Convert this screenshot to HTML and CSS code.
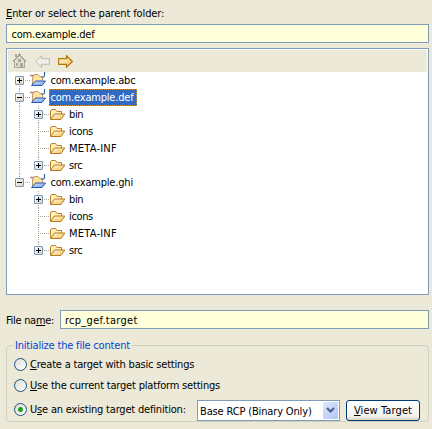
FILE: index.html
```html
<!DOCTYPE html>
<html lang="en">
<head>
<meta charset="utf-8">
<title>Target Definition</title>
<link rel="stylesheet" href="styles.css">
</head>
<body>
<svg class="defs" aria-hidden="true">
  <defs>
    <linearGradient id="gold" x1="0" y1="0" x2="1" y2="1"><stop offset="0" stop-color="#fffbe0"/><stop offset="1" stop-color="#f0c35c"/></linearGradient>
    <linearGradient id="blue" x1="0" y1="0" x2="1" y2="1"><stop offset="0" stop-color="#d3e5fb"/><stop offset="1" stop-color="#6fa0e4"/></linearGradient>
    <symbol id="folder" viewBox="0 0 16 14">
      <path d="M.5 12V4l1-1.500h4l1.500 2h4.500v3" fill="#fff0b5" stroke="#bd7f2b"/>
      <path d="M.5 12.500l4-5.500h10.300l-3.800 5.500z" fill="url(#gold)" stroke="#b97821"/>
    </symbol>
    <symbol id="project" viewBox="0 0 17 16">
      <path d="M2.500 13V5l1-1 1-1.500h3.500l1.500 2h3v4" fill="#fce3a0" stroke="#c09a66"/>
      <path d="M0 3.500h4" stroke="#a88d85" stroke-width="1.500" fill="none"/>
      <path d="M1.500 13.500l4-4.500h10l-3.500 4.500z" fill="url(#blue)" stroke="#2a55b0"/>
      <path d="M14.500 0v3.500q0 1.800-2 1.800h-1" fill="none" stroke="#23609c" stroke-width="1.100"/>
    </symbol>
  </defs>
</svg>
<main class="page">
  <label class="text heading"><u>E</u>nter or select the parent folder:</label>
  <div class="field parent text">com.example.def</div>
  <section class="browser">
    <div class="toolbar">
      <svg class="tool" width="15" height="16" viewBox="0 0 15 16" shape-rendering="crispEdges"><path d="M3 1h2v3H3z" fill="#a9a797"/><path d="M2.500 7.500v7h10v-7l-5-5z" fill="#e4e1d2" stroke="#a9a797"/><path d="M1 8.500l6.500-7 6.500 7" fill="none" stroke="#a9a797" stroke-width="1.500"/><path d="M6 6h3v3H6zM4 10h2v3H4zM8 10h3v4H8z" fill="#a9a797"/></svg>
      <svg class="tool back" width="15" height="13" viewBox="0 0 15 13"><path d="M.7 6.500L6.500.7v3h7.800v5.600H6.500v3z" fill="#efeeea" stroke="#bdbbb5"/></svg>
      <svg class="tool next" width="15" height="13" viewBox="0 0 15 13"><path d="M14.300 6.500L8.500.7v3H.7v5.600h7.800v3z" fill="url(#gold)" stroke="#b57608" stroke-width="1.200"/></svg>
    </div>
    <div class="tree text">
      <div class="row root first"><i class="box plus"></i><svg class="project"><use href="#project"/></svg><span class="name">com.example.abc</span></div>
      <div class="row root mid"><i class="box"></i><svg class="project"><use href="#project"/></svg><span class="name selected">com.example.def</span></div>
      <div class="row child outer"><i class="box plus"></i><svg class="folder"><use href="#folder"/></svg><span>bin</span></div>
      <div class="row child outer"><i class="gap"></i><svg class="folder"><use href="#folder"/></svg><span>icons</span></div>
      <div class="row child outer"><i class="gap"></i><svg class="folder"><use href="#folder"/></svg><span class="meta">META-INF</span></div>
      <div class="row child outer end"><i class="box plus"></i><svg class="folder"><use href="#folder"/></svg><span>src</span></div>
      <div class="row root last"><i class="box"></i><svg class="project"><use href="#project"/></svg><span class="name">com.example.ghi</span></div>
      <div class="row child"><i class="box plus"></i><svg class="folder"><use href="#folder"/></svg><span>bin</span></div>
      <div class="row child"><i class="gap"></i><svg class="folder"><use href="#folder"/></svg><span>icons</span></div>
      <div class="row child"><i class="gap"></i><svg class="folder"><use href="#folder"/></svg><span class="meta">META-INF</span></div>
      <div class="row child end"><i class="box plus"></i><svg class="folder"><use href="#folder"/></svg><span>src</span></div>
    </div>
  </section>
  <div class="filename text"><label class="filelabel">File na<u>m</u>e:</label><div class="field file">rcp_gef.target</div></div>
  <fieldset class="content text">
    <legend>Initialize the file content</legend>
    <label class="option create"><i class="radio"></i><span><u>C</u>reate a target with basic settings</span></label>
    <label class="option current"><i class="radio"></i><span><u>U</u>se the current target platform settings</span></label>
    <div class="option existing"><i class="radio checked"></i><span class="caption">U<u>s</u>e an existing target definition:</span>
      <div class="combo"><span>Base RCP (Binary Only)</span><b class="drop"><svg width="9" height="7" viewBox="0 0 9 7"><path d="M1 1l3.500 3.500L8 1" fill="none" stroke="#4d6185" stroke-width="2.200"/></svg></b></div>
      <button class="view text" type="button"><u>V</u>iew Target</button>
    </div>
  </fieldset>
</main>
</body>
</html>
```
FILE: styles.css
```css
* { box-sizing: border-box; }
body { margin: 0; background: #ece9d8; overflow: hidden; }
.defs { position: absolute; width: 0; height: 0; }
.page { width: 432px; height: 429px; padding: 6px 3px 0 6px; display: flex; flex-direction: column; }
.text { font: 11px/15px "DejaVu Sans Condensed", "DejaVu Sans", sans-serif; font-stretch: condensed; color: #000; white-space: nowrap; letter-spacing: -0.19px; }
u { text-decoration-thickness: 1px; text-underline-offset: 1px; }
.heading { height: 18px; letter-spacing: -0.12px; }
.field { height: 19px; border: 1px solid #7f9db9; background: #ffffd9; padding: 2px 5px 0; }
.parent { padding-left: 4.5px; }
.browser { margin-top: 5px; height: 247px; border: 1px solid #7f9db9; background: #fff; padding: 1px; }
.toolbar { height: 22px; background: #ece9d8; display: flex; align-items: center; padding-left: 4px; }
.back { margin-left: 8px; }
.next { margin-left: 8px; }
.tree { display: flex; flex-direction: column; }
.row { height: 17px; display: flex; align-items: center; position: relative; }
.root { padding-left: 7px; }
.child { padding-left: 26px; letter-spacing: -0.35px; }
.meta { letter-spacing: 0.22px; }
.row::before, .outer::after { content: ""; position: absolute; top: 0; bottom: 0; width: 1px; background: repeating-linear-gradient(#a9a797 0 1px, transparent 1px 2px); }
.root::before { left: 11px; }
.first::before { top: 8px; }
.last::before { bottom: 8px; }
.child::before { left: 30px; }
.end::before { bottom: 8px; }
.outer::after { left: 11px; }
.box { width: 9px; height: 9px; border: 1px solid #7898b5; border-radius: 1px; background: linear-gradient(#000, #000) center / 5px 1px no-repeat, linear-gradient(135deg, #fff, #d8d2c3); z-index: 1; }
.plus { background: linear-gradient(#000, #000) center / 5px 1px no-repeat, linear-gradient(#000, #000) center / 1px 5px no-repeat, linear-gradient(135deg, #fff, #d8d2c3); }
.gap { width: 9px; height: 1px; background: repeating-linear-gradient(90deg, #a9a797 0 1px, transparent 1px 2px) right / 5px 1px no-repeat; }
.project, .folder { flex: none; overflow: visible; position: relative; }
.project { width: 17px; height: 16px; margin: -1px 2px 0 6px; }
.folder { width: 16px; height: 14px; margin: -1px 3px 0 7px; }
.box::after { content: ""; display: block; width: 5px; height: 1px; margin: 3px 0 0 9px; background: repeating-linear-gradient(90deg, #a9a797 0 1px, transparent 1px 2px); }
.gap::after { content: ""; display: block; width: 5px; height: 1px; margin-left: 10px; background: repeating-linear-gradient(90deg, #a9a797 0 1px, transparent 1px 2px); }
.name { height: 17px; padding: 1px 2px 1px 1.5px; width: 88px; }
.selected { background: #316ac5; color: #fff; outline: 1px dotted #d69a30; outline-offset: -1px; }
.filename { margin-top: 15px; display: flex; }
.filelabel { width: 54px; padding-top: 3px; letter-spacing: -0.3px; }
.file { flex: 1; padding-left: 4px; letter-spacing: 0.27px; }
.content { margin: 9px 0 0; padding: 0 0 0 7px; height: 84px; border: 1px solid #d0d0bf; border-radius: 4px; min-width: 0; }
.content legend { height: 15px; padding: 0 2px; margin-left: -1px; color: #0046d5; }
.option { display: flex; align-items: center; height: 21px; }
.create { margin-top: 1px; }
.radio { width: 13px; height: 13px; flex: none; margin-right: 3px; border: 1px solid #1c5180; border-radius: 50%; background: linear-gradient(135deg, #dcdcd7, #fff); }
.checked { background: radial-gradient(circle, #21a121 0 2px, transparent 3px), linear-gradient(135deg, #dcdcd7, #fff); }
.existing { margin-top: 3px; }
.caption { width: 167px; }
.combo { width: 143px; height: 21px; display: flex; justify-content: space-between; margin-top: 2px; border: 1px solid #7f9db9; background: #fff; padding: 1px 1px 1px 2px; letter-spacing: -0.15px; }
.combo span { padding-top: 2px; }
.drop { width: 15px; height: 17px; display: flex; align-items: center; justify-content: center; border-radius: 1px; background: linear-gradient(135deg, #dce7ff, #b0c6f6); }
.view { margin: 2px 0 0 6px; width: 74px; height: 21px; padding: 0; border: 1px solid #003c74; border-radius: 3px; background: linear-gradient(#fff, #f3f2ec 80%, #d8d2c6); letter-spacing: 0.1px; }
```
